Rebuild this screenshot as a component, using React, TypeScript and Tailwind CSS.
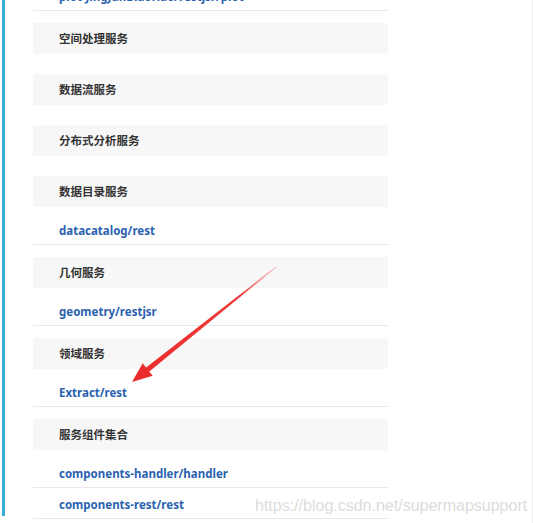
import React from "react";

type Section = { title: string; links: string[] };

const sections: Section[] = [
  { title: "空间处理服务", links: [] },
  { title: "数据流服务", links: [] },
  { title: "分布式分析服务", links: [] },
  { title: "数据目录服务", links: ["datacatalog/rest"] },
  { title: "几何服务", links: ["geometry/restjsr"] },
  { title: "领域服务", links: ["Extract/rest"] },
  { title: "服务组件集合", links: ["components-handler/handler", "components-rest/rest"] },
];

const cjk = { fontFamily: '"Noto Sans CJK SC", "Noto Sans", sans-serif' };
const latin = { fontFamily: '"Noto Sans", "Open Sans", sans-serif' };

function LinkRow({ text }: { text: string }) {
  return (
    <div className="h-[31px] border-b border-[#e9e9e9] flex items-center pl-[26px] pt-[3px]">
      <span
        className="text-[11.5px] font-bold text-[#2a62b0] leading-none"
        style={latin}
      >
        {text}
      </span>
    </div>
  );
}

export default function App() {
  return (
    <div className="relative w-[533px] h-[523px] overflow-hidden bg-white">
      <div className="flex h-full">
        <div className="ml-[2px] w-[3px] h-[516px] bg-[#39acd8] shrink-0" />
        <div className="ml-[28px] w-[355px] mt-[-20px]">
          <div className="mb-[12px]">
            <LinkRow text="plot-JingJunBiaoHao/restjsr/plot" />
          </div>
          {sections.map((s) => (
            <div key={s.title} className={s.links.length ? "mb-[12px]" : "mb-[20px]"}>
              <div className="h-[31px] bg-[#f7f7f7] flex items-center pl-[26px] pt-[1px]">
                <span
                  className="text-[11.5px] font-bold text-[#333] leading-none"
                  style={cjk}
                >
                  {s.title}
                </span>
              </div>
              {s.links.length > 0 && (
                <div className="pt-[7px]">
                  {s.links.map((l) => (
                    <LinkRow key={l} text={l} />
                  ))}
                </div>
              )}
            </div>
          ))}
        </div>
      </div>
      <div className="absolute right-0 top-0 w-px h-full bg-[#ededed]" />
      <svg
        className="absolute left-0 top-0 pointer-events-none"
        width="533"
        height="523"
        viewBox="0 0 533 523"
      >
        <defs>
          <linearGradient id="ag" x1="276" y1="267" x2="132" y2="382" gradientUnits="userSpaceOnUse">
            <stop offset="0" stopColor="#f4a0a0" stopOpacity="0.6" />
            <stop offset="0.25" stopColor="#ee3b3b" />
            <stop offset="1" stopColor="#ea2a2a" />
          </linearGradient>
        </defs>
        <polygon
          points="276.3,267.4 149.3,371.5 152.7,375.8 132,382 142.7,363.2 146.1,367.5 275.7,266.6"
          fill="url(#ag)"
        />
      </svg>
      <div
        className="absolute left-[255px] top-[498px] text-[16px] text-[#dcdcdc] leading-none whitespace-nowrap"
        style={{ fontFamily: '"Liberation Sans", Arial, sans-serif' }}
      >
        https://blog.csdn.net/supermapsupport
      </div>
    </div>
  );
}
